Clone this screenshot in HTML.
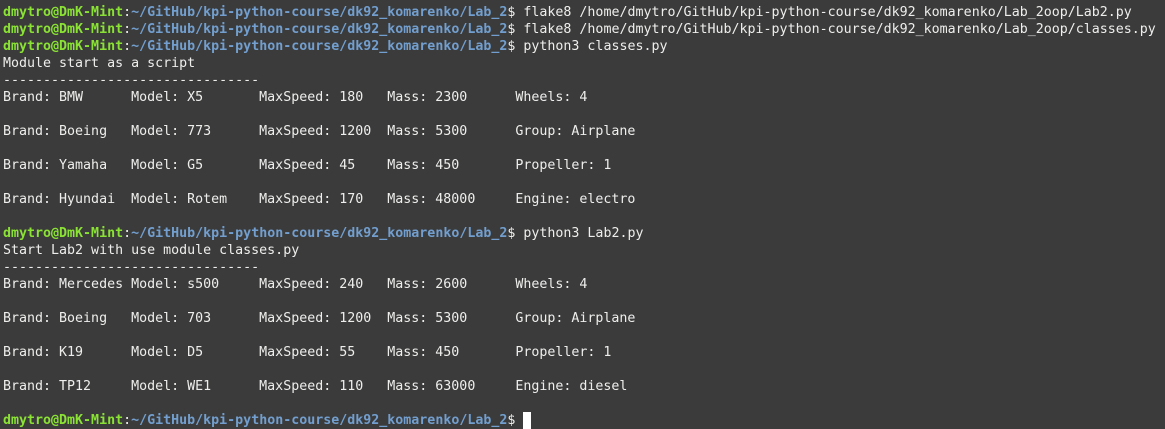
<!DOCTYPE html>
<html><head><meta charset="utf-8">
<style>
html,body{margin:0;padding:0;background:#3b3b3b;width:1165px;height:428px;overflow:hidden}
pre{margin:0;position:absolute;left:3px;top:4px;font-family:"DejaVu Sans Mono","Liberation Mono",monospace;font-size:13.3px;line-height:17px;color:#eeeeec;white-space:pre}
.g{color:#8ae234;font-weight:bold}
.b{color:#729fcf;font-weight:bold}
.c{display:inline-block;width:8px;height:17px;background:#fff;vertical-align:top}
</style></head><body>
<pre><span class="g">dmytro@DmK-Mint</span>:<span class="b">~/GitHub/kpi-python-course/dk92_komarenko/Lab_2</span>$ flake8 /home/dmytro/GitHub/kpi-python-course/dk92_komarenko/Lab_2oop/Lab2.py
<span class="g">dmytro@DmK-Mint</span>:<span class="b">~/GitHub/kpi-python-course/dk92_komarenko/Lab_2</span>$ flake8 /home/dmytro/GitHub/kpi-python-course/dk92_komarenko/Lab_2oop/classes.py
<span class="g">dmytro@DmK-Mint</span>:<span class="b">~/GitHub/kpi-python-course/dk92_komarenko/Lab_2</span>$ python3 classes.py
Module start as a script
--------------------------------
Brand: BMW      Model: X5       MaxSpeed: 180   Mass: 2300      Wheels: 4

Brand: Boeing   Model: 773      MaxSpeed: 1200  Mass: 5300      Group: Airplane

Brand: Yamaha   Model: G5       MaxSpeed: 45    Mass: 450       Propeller: 1

Brand: Hyundai  Model: Rotem    MaxSpeed: 170   Mass: 48000     Engine: electro

<span class="g">dmytro@DmK-Mint</span>:<span class="b">~/GitHub/kpi-python-course/dk92_komarenko/Lab_2</span>$ python3 Lab2.py
Start Lab2 with use module classes.py
--------------------------------
Brand: Mercedes Model: s500     MaxSpeed: 240   Mass: 2600      Wheels: 4

Brand: Boeing   Model: 703      MaxSpeed: 1200  Mass: 5300      Group: Airplane

Brand: K19      Model: D5       MaxSpeed: 55    Mass: 450       Propeller: 1

Brand: TP12     Model: WE1      MaxSpeed: 110   Mass: 63000     Engine: diesel

<span class="g">dmytro@DmK-Mint</span>:<span class="b">~/GitHub/kpi-python-course/dk92_komarenko/Lab_2</span>$ <span class="c"></span></pre>
</body></html>
